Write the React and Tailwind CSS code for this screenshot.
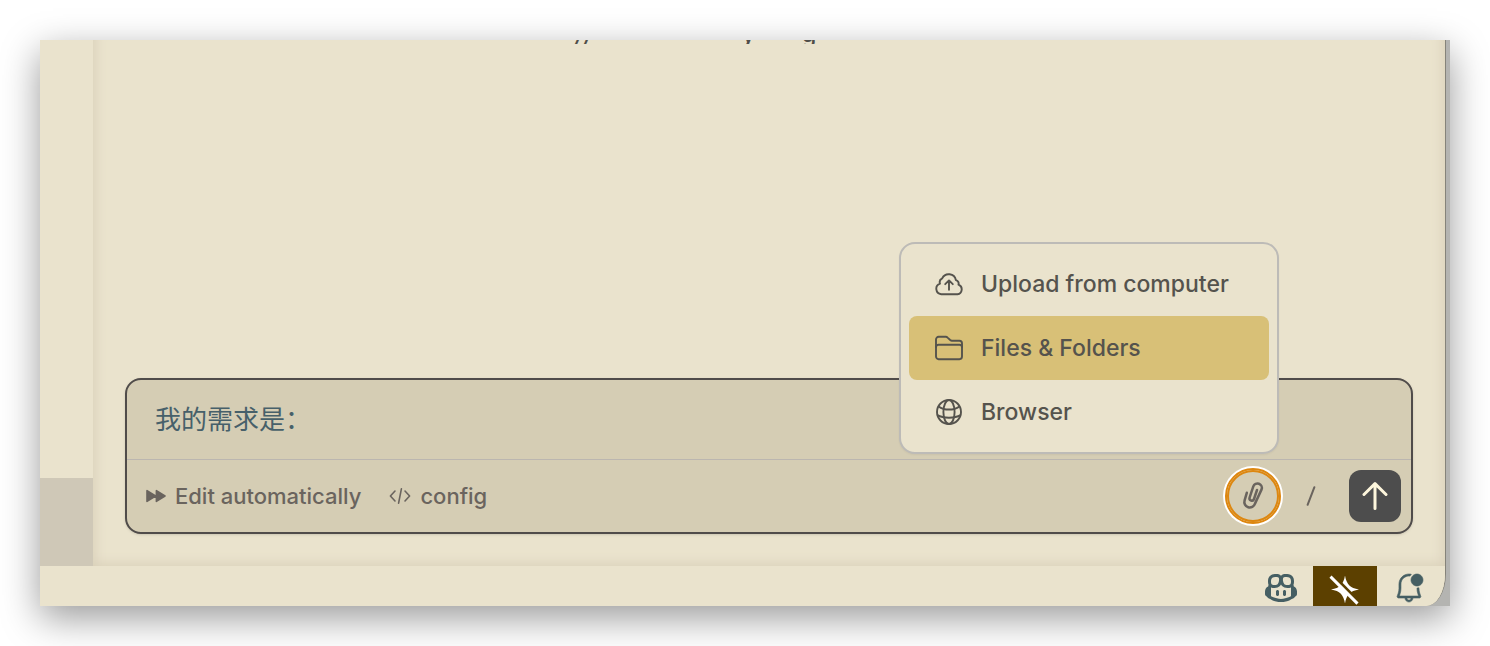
import React, { useState } from "react";
import { VscBellDot, VscCopilot } from "react-icons/vsc";

const CloudIcon = () => (
  <svg viewBox="0 0 28 28" className="size-7" fill="none" stroke="currentColor" strokeWidth="1.9" strokeLinecap="round" strokeLinejoin="round">
    <path d="M6.2 24.2a5.4 5.4 0 0 1-1.2-10.5 4.4 4.4 0 0 1 2.2-5.4 7.3 7.3 0 0 1 13.7 1.8 3.6 3.6 0 0 1 2.6 4.5 5 5 0 0 1-1 9.6H6.2z" />
    <path d="M14 19.8v-8.6M10.2 14.2l3.8-3.8 3.8 3.8" />
  </svg>
);

const FolderIcon = () => (
  <svg viewBox="0 0 28 28" className="size-7" fill="none" stroke="currentColor" strokeWidth="1.9" strokeLinecap="round" strokeLinejoin="round">
    <path d="M1 22.6V5.4A2.6 2.6 0 0 1 3.6 2.8h7.2c.7 0 1.3.3 1.8.8l2.6 2.4c.5.4 1 .7 1.7.7h7.5A2.6 2.6 0 0 1 27 9.3v13.3a2.6 2.6 0 0 1-2.6 2.6H3.6A2.6 2.6 0 0 1 1 22.6z" />
    <path d="M1 13a2.6 2.6 0 0 1 2.6-2.2h20.8a2.6 2.6 0 0 1 2.6 2.2" />
  </svg>
);

const GlobeIcon = () => (
  <svg viewBox="0 0 28 28" className="size-7" fill="none" stroke="currentColor" strokeWidth="1.9">
    <circle cx="14" cy="14" r="12" />
    <ellipse cx="14" cy="14" rx="5.6" ry="12" />
    <path d="M3.6 8.4c5.6 4.2 15.2 4.2 20.8 0M2.4 17.2c6 3.4 17.2 3.4 23.2 0" />
  </svg>
);

const ForwardIcon = () => (
  <svg viewBox="0 0 20 14" className="h-3.5 w-5" fill="currentColor" stroke="currentColor" strokeWidth="1.6" strokeLinejoin="round">
    <path d="M1 1.6v10.8L9.6 7zM10.4 1.6v10.8L19 7z" />
  </svg>
);

const CodeIcon = () => (
  <svg viewBox="0 0 22 18" className="h-[18px] w-[22px]" fill="none" stroke="currentColor" strokeWidth="1.6" strokeLinecap="round" strokeLinejoin="round">
    <path d="M6 4L1.4 9 6 14M16 4l4.6 5-4.6 5M12.4 1.8L9.6 16.2" />
  </svg>
);

const PaperclipIcon = () => (
  <svg viewBox="0 0 28 30" className="h-[30px] w-7" fill="none" stroke="currentColor" strokeWidth="2.5" strokeLinecap="round" strokeLinejoin="round">
    <path d="M7.8 11.8L5.6 19.4a5.4 5.4 0 0 0 10.4 3.2L22.6 8.4a4.4 4.4 0 0 0-8.3-3L10.6 16.6a2.3 2.3 0 0 0 4.4 1.4l3-9" />
  </svg>
);

const SparkleOffIcon = () => (
  <svg viewBox="0 0 32 32" className="size-8" fill="none">
    <path d="M16 1.4c1.4 8.6 5 12.6 14 14-9 1.4-12.6 5.4-14 14-1.4-8.6-5-12.6-14-14 9-1.4 12.6-5.4 14-14z" fill="#fff" />
    <path d="M4 1.2l27.5 28" stroke="#5c4000" strokeWidth="3" />
    <path d="M1.5 2.6l27 27" stroke="#fff" strokeWidth="3" />
  </svg>
);

const attachItems = [
  { label: "Upload from computer", Icon: CloudIcon },
  { label: "Files & Folders", Icon: FolderIcon },
  { label: "Browser", Icon: GlobeIcon },
];

const AttachMenu = ({ active, onSelect }) => (
  <div
    role="menu"
    className="absolute right-0 bottom-[68px] w-[380px] rounded-2xl border-2 border-[#bdbbb7] bg-[#eae3cd] p-2 shadow-xs"
  >
    {attachItems.map(({ label, Icon }) => (
      <button
        key={label}
        role="menuitem"
        onMouseEnter={() => onSelect(label)}
        className={`flex h-16 w-full items-center gap-[18px] rounded-lg px-[26px] text-left text-[23px] font-medium text-[#55534d] ${
          active === label ? "bg-[#d8c077]" : ""
        }`}
      >
        <Icon />
        {label}
      </button>
    ))}
  </div>
);

const PromptBox = () => {
  const [prompt, setPrompt] = useState("我的需求是：");
  const [active, setActive] = useState("Files & Folders");

  return (
    <div className="rounded-2xl border-2 border-[#504c4a] bg-[#d5cdb4] shadow-sm">
      <input
        type="text"
        aria-label="Prompt"
        value={prompt}
        onChange={(e) => setPrompt(e.target.value)}
        className="block h-[79px] w-full bg-transparent px-7 pb-1 text-[26px] text-[#47606a] outline-none"
      />
      <div className="flex items-center justify-between border-t border-[#bbb6b0] py-2.5 pr-2.5 pl-[19px] text-[#6a645e]">
        <div className="flex items-center gap-7 text-[22px] font-medium">
          <button className="flex items-center gap-[9px]">
            <ForwardIcon />
            Edit automatically
          </button>
          <button className="flex items-center gap-[9px]">
            <CodeIcon />
            config
          </button>
        </div>
        <div className="flex items-center gap-1.5">
          <div className="relative">
            <button
              aria-label="Attach"
              className="flex size-[52px] items-center justify-center rounded-full border-2 border-[#dd8710] ring-4 ring-white outline-2 outline-[#dd8710]"
            >
              <PaperclipIcon />
            </button>
            <AttachMenu active={active} onSelect={setActive} />
          </div>
          <button aria-label="Commands" className="mr-1.5 flex size-[52px] items-center justify-center">
            <svg viewBox="0 0 12 22" className="h-[22px] w-3" fill="none" stroke="currentColor" strokeWidth="2" strokeLinecap="round">
              <path d="M9.4 2.2L2.6 19.8" />
            </svg>
          </button>
          <button
            aria-label="Send"
            className="flex size-[52px] items-center justify-center rounded-xl bg-[#4d4d4d]"
          >
            <svg viewBox="0 0 28 28" className="size-7" fill="none" stroke="#fdf6dc" strokeWidth="3" strokeLinecap="round" strokeLinejoin="round">
              <path d="M14 26.5V2M3 12.5L14 1.6l11 10.9" />
            </svg>
          </button>
        </div>
      </div>
    </div>
  );
};

const StatusBar = () => (
  <footer className="flex h-10 justify-end bg-[#eae3cd] pr-1 text-[#465f63]">
    <button aria-label="Copilot" className="flex w-16 items-center justify-center pt-0.5">
      <VscCopilot size={32} />
    </button>
    <button aria-label="Suggestions off" className="flex w-16 items-center justify-center bg-[#5c4000] pt-2">
      <SparkleOffIcon />
    </button>
    <button aria-label="Notifications" className="flex w-16 items-center justify-center pt-1">
      <VscBellDot size={32} className="stroke-current stroke-[0.3]" />
    </button>
  </footer>
);

const App = () => {
  return (
    <div className="flex min-h-screen bg-white p-10 font-[Inter,'Noto_Sans_CJK_SC',sans-serif]">
      <div className="flex flex-1 bg-[#b4b4b1] pr-1 shadow-[0_12px_36px_rgba(0,0,0,0.4)]">
        <div className="flex flex-1 flex-col overflow-hidden rounded-br-[20px_32px] border-r border-[#85837a] bg-[#eae3cd]">
          <div className="flex flex-1">
            <aside className="flex w-[53px] flex-col justify-end">
              <div className="h-[88px] bg-[#cfc8b7]" />
            </aside>
            <main className="flex flex-1 flex-col justify-between px-8 pb-8 shadow-[inset_14px_0_12px_-12px_#d9d0b9,inset_-14px_0_12px_-12px_#d9d0b9,inset_0_-14px_12px_-12px_#d9d0b9]">
              {/* last line of the scrolled conversation, only its descenders show */}
              <p className="flex h-1 items-end justify-center overflow-hidden pr-[146px] text-2xl leading-5 font-medium text-[#504e49]">
                <span className="w-[166px] italic">//</span>
                <span className="w-[60px]">y</span>
                <span>g</span>
              </p>
              <PromptBox />
            </main>
          </div>
          <StatusBar />
        </div>
      </div>
    </div>
  );
};

export default App;
